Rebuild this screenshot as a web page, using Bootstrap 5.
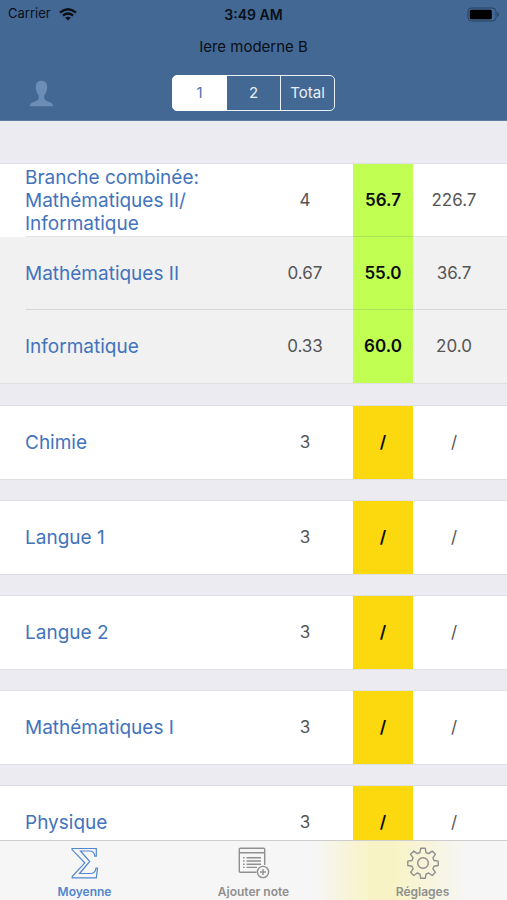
<!DOCTYPE html>
<html lang="fr">
<head>
<meta charset="utf-8">
<meta name="viewport" content="width=device-width, initial-scale=1">
<title>Moyenne</title>
<link href="https://cdn.jsdelivr.net/npm/bootstrap@5.3.0/dist/css/bootstrap.min.css" rel="stylesheet">
<style>
  body { font-family: Inter, "Liberation Sans", sans-serif; background: #ebebf1; }
  .top-area { background: #436894; color: #0a0f16; border-bottom: 1px solid #5f7da3; }
  .status-line { height: 28px; font-size: 13px; grid-template-columns: 1fr auto 1fr; }
  .status-line .clock { font-size: 14px; }
  .title-line { font-size: 15px; line-height: 38px; }
  .tool-line { height: 54px; grid-template-columns: 1fr auto 1fr; }
  .three-cols { display: grid; align-items: center; }
  .person-btn { color: #6c8db5; margin-left: 29px; }
  .terms .btn {
    --bs-btn-color: #eaf0f7; --bs-btn-border-color: #eaf0f7; --bs-btn-border-radius: 5px;
    --bs-btn-hover-color: #fff; --bs-btn-hover-border-color: #fff;
    --bs-btn-active-bg: #fff; --bs-btn-active-color: #4a74a8; --bs-btn-active-border-color: #fff;
    --bs-btn-font-size: 15px; --bs-btn-line-height: 34px; --bs-btn-padding-x: 0; --bs-btn-padding-y: 0;
    width: 55px;
  }
  .grades { overflow-y: auto; scrollbar-width: none; padding-top: 43px; }
  .grades::-webkit-scrollbar { display: none; }
  .grade-table { table-layout: fixed; margin-bottom: 22px; background: #fff; box-shadow: 0 -1px 0 #dfdfe4, 0 1px 0 #dfdfe4; color: #555; font-size: 17px; }
  .grade-table.combined { margin-bottom: 23px; }
  .grade-table tr { height: 73px; }
  .grade-table th, .grade-table td { padding: 0; text-align: center; vertical-align: middle; }
  .grade-table th { font-size: 19px; line-height: 23px; font-weight: 400; text-align: left; padding-left: 25px; }
  .grade-table td:last-child { padding-right: 12px; }
  .c-weight { width: 96px; } .c-mark { width: 60px; } .c-points { width: 94px; }
  .grade-table a { color: #4273bd; text-decoration: none; }
  .grade-table .mark-cell { color: #0b0b0b; font-weight: 600; background-color: #fcd80f; }
  .grade-table .mark-cell.good { background-color: #c1ff53; }
  .sub-row { background: #f1f1f1; }
  .ruled > * { background-image: linear-gradient(rgba(110,110,120,.2), rgba(110,110,120,.2)); background-size: 100% 1px; background-repeat: no-repeat; background-position: 0 100%; }
  .ruled > th { background-position: 26px 100%; }
  .tabs {
    height: 60px; border-top: 1px solid #cdcdcd;
    background: linear-gradient(90deg, rgba(250,240,150,0) 62%, rgba(250,240,150,.5) 73%, rgba(250,240,150,.5) 78%, rgba(250,240,150,0) 92%) #f6f6f6;
  }
  .tabs a { color: #8f8f8f; font-size: 12px; line-height: 16px; font-weight: 600; padding-top: 6px; gap: 5px; }
  .tabs a.active { color: #5087cf; }
</style>
</head>
<body>
<div class="vh-100 d-flex flex-column overflow-hidden">
  <header class="top-area flex-shrink-0">
    <div class="status-line three-cols px-2">
      <div class="d-flex align-items-center gap-2">
        <span>Carrier</span>
        <svg width="18" height="13" viewBox="0 0 18 13" fill="none" stroke="currentColor" stroke-width="2.3" aria-hidden="true"><path d="M1 4.6Q9-2.2 17 4.6M3.9 7.6Q9 3.3 14.1 7.6"/><path d="M6.2 9.7Q9 7.6 11.8 9.7L9 12.6Z" fill="currentColor" stroke="none"/></svg>
      </div>
      <span class="clock fw-semibold">3:49 AM</span>
      <svg class="ms-auto" width="32" height="15" viewBox="0 0 32 15" aria-hidden="true"><rect x="1" y="1" width="28" height="13" rx="3.5" fill="none" stroke="#27425f"/><rect x="2.800" y="2.800" width="22" height="9.500" rx="1.500" fill="#000"/><path d="M30.300 5v5q1.600-.7 1.600-2.500T30.300 5Z" fill="#27425f"/></svg>
    </div>
    <div class="title-line text-center">Iere moderne B</div>
    <div class="tool-line three-cols">
      <div>
        <button type="button" class="person-btn btn border-0 p-0 d-flex" aria-label="Profil">
          <svg width="25" height="27" viewBox="0 0 25 27" fill="currentColor" aria-hidden="true"><path d="M12.500.8C8.700.8 6.600 3.200 6.800 7c.1 3.700 1.100 6.400 3 8.200v3.300c-.3 1.200-1.500 2-3.300 2.800C3.700 22.500 1 23.200.8 26.200h23.400c-.2-3-2.900-3.700-5.700-4.900-1.800-.8-3-1.600-3.300-2.800v-3.300c1.900-1.800 2.900-4.500 3-8.200.2-3.800-1.900-6.200-5.700-6.200Z"/></svg>
        </button>
      </div>
      <div class="terms btn-group" role="group" aria-label="Semestre">
        <input type="radio" class="btn-check" name="term" id="t1" checked><label class="btn" for="t1">1</label>
        <input type="radio" class="btn-check" name="term" id="t2"><label class="btn" for="t2">2</label>
        <input type="radio" class="btn-check" name="term" id="t3"><label class="btn" for="t3">Total</label>
      </div>
    </div>
  </header>

  <main class="grades flex-fill">
    <table class="grade-table combined w-100">
      <colgroup><col><col class="c-weight"><col class="c-mark"><col class="c-points"></colgroup>
      <tbody>
        <tr class="ruled"><th scope="row"><a href="#">Branche combinée: Mathématiques II/<wbr>Informatique</a></th><td>4</td><td class="mark-cell good">56.7</td><td>226.7</td></tr>
        <tr class="sub-row ruled"><th scope="row"><a href="#">Mathématiques II</a></th><td>0.67</td><td class="mark-cell good">55.0</td><td>36.7</td></tr>
        <tr class="sub-row"><th scope="row"><a href="#">Informatique</a></th><td>0.33</td><td class="mark-cell good">60.0</td><td>20.0</td></tr>
      </tbody>
    </table>
    <table class="grade-table w-100">
      <colgroup><col><col class="c-weight"><col class="c-mark"><col class="c-points"></colgroup>
      <tbody><tr><th scope="row"><a href="#">Chimie</a></th><td>3</td><td class="mark-cell">/</td><td>/</td></tr></tbody>
    </table>
    <table class="grade-table w-100">
      <colgroup><col><col class="c-weight"><col class="c-mark"><col class="c-points"></colgroup>
      <tbody><tr><th scope="row"><a href="#">Langue 1</a></th><td>3</td><td class="mark-cell">/</td><td>/</td></tr></tbody>
    </table>
    <table class="grade-table w-100">
      <colgroup><col><col class="c-weight"><col class="c-mark"><col class="c-points"></colgroup>
      <tbody><tr><th scope="row"><a href="#">Langue 2</a></th><td>3</td><td class="mark-cell">/</td><td>/</td></tr></tbody>
    </table>
    <table class="grade-table w-100">
      <colgroup><col><col class="c-weight"><col class="c-mark"><col class="c-points"></colgroup>
      <tbody><tr><th scope="row"><a href="#">Mathématiques I</a></th><td>3</td><td class="mark-cell">/</td><td>/</td></tr></tbody>
    </table>
    <table class="grade-table w-100">
      <colgroup><col><col class="c-weight"><col class="c-mark"><col class="c-points"></colgroup>
      <tbody><tr><th scope="row"><a href="#">Physique</a></th><td>3</td><td class="mark-cell">/</td><td>/</td></tr></tbody>
    </table>
  </main>

  <nav class="tabs d-flex flex-shrink-0" aria-label="Onglets">
    <a href="#" class="active d-flex flex-column align-items-center text-decoration-none w-100" aria-current="page">
      <svg width="32" height="32" viewBox="0 0 32 32" fill="none" stroke="currentColor" stroke-width="1.200" aria-hidden="true"><path d="M3 1.500H27.300V9.200H25.800Q25.300 4 20.500 4H11.500L20.700 14.500 10.500 26.500H21.500Q26.300 26.500 27 21H28.500L27.300 30.800H3.200V29.600L15.800 15.800 3 2.600Z"/></svg>
      Moyenne</a>
    <a href="#" class="d-flex flex-column align-items-center text-decoration-none w-100">
      <svg width="32" height="32" viewBox="0 0 32 32" fill="none" stroke="currentColor" stroke-width="1.400" aria-hidden="true"><path d="M18.500 25.300H2.300Q1.300 25.300 1.300 24.300V2.300Q1.300 1.300 2.300 1.300H25.700Q26.700 1.300 26.700 2.300V18M1.300 5.800H26.700M8.500 10.800H23M8.500 14H23M8.500 17.200H23M8.500 20.400H19M5 10.800H6.600M5 14H6.600M5 17.200H6.600M5 20.400H6.600"/><circle cx="25" cy="25" r="5.600"/><path d="M25 22V28M22 25H28"/></svg>
      Ajouter note</a>
    <a href="#" class="d-flex flex-column align-items-center text-decoration-none w-100">
      <svg width="32" height="32" viewBox="0 0 32 32" fill="none" stroke="currentColor" stroke-width="1.400" stroke-linejoin="round" aria-hidden="true"><circle cx="16" cy="16" r="5.300"/><path d="M13.700 1.300h4.600l.7 4.200 2.700 1.100 3.500-2.500 3.200 3.200-2.500 3.500L27 13.500l4.200.6v4.400l-4.200.7-1.100 2.600 2.500 3.500-3.200 3.200-3.500-2.500-2.700 1.100-.7 4.200h-4.600l-.7-4.200-2.700-1.100-3.500 2.500-3.200-3.200 2.500-3.500L5 19.200l-4.200-.7v-4.400L5 13.500l1.100-2.700-2.500-3.500 3.200-3.200 3.500 2.500L13 5.500Z"/></svg>
      Réglages</a>
  </nav>
</div>
<script src="https://cdn.jsdelivr.net/npm/bootstrap@5.3.0/dist/js/bootstrap.bundle.min.js"></script>
</body>
</html>
